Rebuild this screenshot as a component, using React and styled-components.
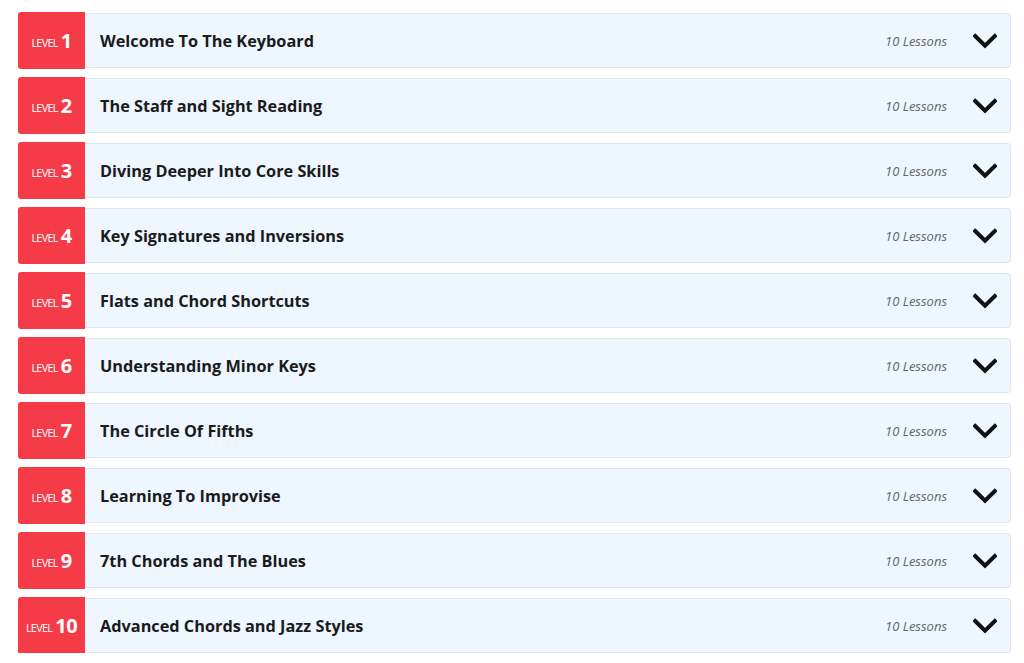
import React from 'react';
import styled, { createGlobalStyle } from 'styled-components';

const levels = [
  'Welcome To The Keyboard',
  'The Staff and Sight Reading',
  'Diving Deeper Into Core Skills',
  'Key Signatures and Inversions',
  'Flats and Chord Shortcuts',
  'Understanding Minor Keys',
  'The Circle Of Fifths',
  'Learning To Improvise',
  '7th Chords and The Blues',
  'Advanced Chords and Jazz Styles',
];

const GlobalStyle = createGlobalStyle`
  body {
    margin: 0;
    background: #fff;
    font-family: "Open Sans", "Liberation Sans", sans-serif;
  }
`;

function Chevron() {
  return (
    <svg width="24" height="16" viewBox="0 0 24 16">
      <path
        d="M2.2 3 L12 12.6 L21.8 3"
        fill="none"
        stroke="#111"
        strokeWidth="4"
        strokeLinecap="square"
        strokeLinejoin="miter"
      />
    </svg>
  );
}

export default function App() {
  return (
    <>
      <GlobalStyle />
      <List>
        {levels.map((title, i) => (
          <Row key={title}>
            <Badge>
              <small>LEVEL</small>
              <b>{i + 1}</b>
            </Badge>
            <Title>{title}</Title>
            <Count>10 Lessons</Count>
            <Toggle>
              <Chevron />
            </Toggle>
          </Row>
        ))}
      </List>
    </>
  );
}

const List = styled.div`
  display: flex;
  flex-direction: column;
  gap: 10px;
  padding: 13px 13px 0 18px;
`;

const Row = styled.div`
  display: flex;
  align-items: center;
  height: 55px;
  background: #eef6ff;
  border: 1px solid #e2e6eb;
  border-left: none;
  border-radius: 4px;
  box-sizing: border-box;
`;

const Badge = styled.div`
  width: 67px;
  height: 57px;
  margin: -1px 0;
  flex: none;
  display: flex;
  align-items: center;
  justify-content: center;
  gap: 3px;
  background: #f53b47;
  color: #fff;
  border-radius: 3px 0 0 3px;

  small {
    font-size: 11px;
    letter-spacing: -0.8px;
    margin-top: 3px;
  }
  b {
    font-size: 20px;
    font-weight: 700;
    letter-spacing: -0.5px;
  }
`;

const Title = styled.div`
  flex: 1;
  padding-left: 15px;
  font-size: 16.3px;
  font-weight: 700;
  color: #1b1b1b;
`;

const Count = styled.div`
  margin-right: 26px;
  font-size: 13px;
  font-style: italic;
  color: #666;
`;

const Toggle = styled.div`
  display: flex;
  padding-right: 13px;
`;
